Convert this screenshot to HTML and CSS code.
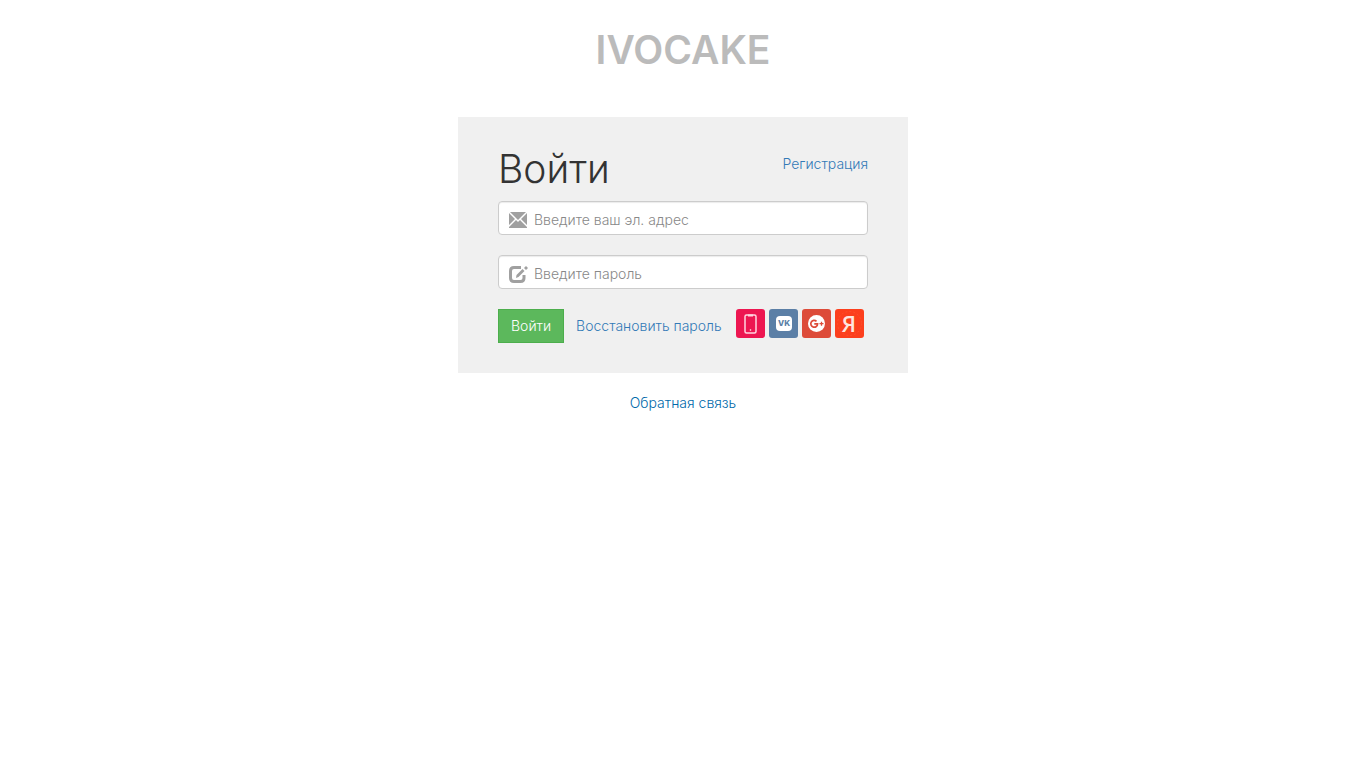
FILE: index.html
```html
<!DOCTYPE html>
<html lang="ru">
<head>
  <meta charset="UTF-8">
  <meta name="viewport" content="width=device-width, initial-scale=1.0">
  <title>Войти</title>
  <link rel="stylesheet" href="styles.css">
</head>
<body>

  <header class="logo">IVOCAKE</header>

  <main class="login-box">
    <div class="login-head">
      <h1>Войти</h1>
      <a href="#" class="register">Регистрация</a>
    </div>

    <form>
      <div class="field">
        <label for="email" aria-label="Эл. адрес">
          <svg width="18" height="16" viewBox="0 0 18 16" fill="#a0a0a0">
            <path d="M1 0H17L9 8Z"/>
            <path d="M0 1L6 7L0 13ZM18 1L12 7L18 13Z"/>
            <path d="M0 16V15L7 8L9 10L11 8L18 15V16Z"/>
          </svg>
        </label>
        <input type="email" id="email" placeholder="Введите ваш эл. адрес">
      </div>

      <div class="field">
        <label for="password" aria-label="Пароль">
          <svg width="19" height="17" viewBox="0 0 19 17" fill="none">
            <path d="M12 1.500H5Q1.500 1.500 1.500 5V12Q1.500 15.500 5 15.500H11.500Q15 15.500 15 12V9" stroke="#a0a0a0" stroke-width="3"/>
            <path d="M7 12L7.500 9L13.500 3L15.500 5L9.500 11Z" fill="#a0a0a0"/>
            <path d="M15 2L17 0L19 2L17 4Z" fill="#a0a0a0"/>
          </svg>
        </label>
        <input type="password" id="password" placeholder="Введите пароль">
      </div>

      <div class="actions">
        <button type="submit" class="login-btn">Войти</button>
        <a href="#" class="restore">Восстановить пароль</a>
        <div class="social">
          <a href="#" class="phone" aria-label="Телефон">
            <svg width="29" height="29" viewBox="0 0 29 29" fill="none" stroke="#ffd5e0">
              <rect x="9" y="6" width="11" height="18" rx="1.500" stroke-width="1.500"/>
              <path d="M12 6.500H17" stroke-width="2"/>
              <circle cx="14.500" cy="21" r="0.500"/>
            </svg>
          </a>
          <a href="#" class="vk" aria-label="VK">
            <svg width="29" height="29" viewBox="0 0 29 29">
              <rect x="7" y="7" width="16" height="15" rx="4" fill="#fff"/>
              <text x="15" y="17" text-anchor="middle" font-size="8" font-weight="800" fill="#5b7fa6">VK</text>
            </svg>
          </a>
          <a href="#" class="google" aria-label="Google+">
            <svg width="29" height="29" viewBox="0 0 29 29" fill="none" stroke="#dd4b39">
              <circle cx="14.500" cy="14.500" r="8.500" fill="#fff" stroke="none"/>
              <path d="M14.500 12.300A3.400 3.400 0 1 0 15.600 14.800H12.300" stroke-width="1.700"/>
              <path d="M17.500 14.700H21.500M19.500 12.700V16.700" stroke-width="1.300"/>
            </svg>
          </a>
          <a href="#" class="yandex" aria-label="Яндекс">
            <svg width="29" height="29" viewBox="0 0 29 29">
              <circle cx="14.500" cy="14.500" r="12" fill="none" stroke="#ff5a3a" stroke-width="0.500" stroke-dasharray="2 2"/>
              <text class="ya" x="14" y="23" text-anchor="middle" font-size="22" font-weight="600" fill="#ffe5df">Я</text>
            </svg>
          </a>
        </div>
      </div>
    </form>
  </main>

  <footer>
    <a href="#">Обратная связь</a>
  </footer>

</body>
</html>
```

FILE: styles.css
```css
* {
  box-sizing: border-box;
}

body {
  margin: 0;
  font-family: Inter, sans-serif;
  font-size: 14px;
  font-weight: 300;
  line-height: 20px;
  color: #333;
  background-color: #fff;
}

a {
  color: #337ab7;
  text-decoration: none;
}

a:hover {
  text-decoration: underline;
}

.logo {
  padding: 20px 0 37px;
  font-size: 39px;
  font-weight: 600;
  line-height: 60px;
  text-align: center;
  color: #bbb;
}

.login-box {
  max-width: 450px;
  margin: 0 auto;
  padding: 30px 40px;
  background-color: #f0f0f0;
}

.login-head {
  display: flex;
  justify-content: space-between;
  align-items: flex-start;
  padding-bottom: 10px;
}

h1 {
  margin: 0;
  font-size: 39px;
  font-weight: 300;
  line-height: 44px;
}

.register {
  padding-top: 7px;
}

.field {
  display: flex;
  align-items: center;
  height: 34px;
  margin-bottom: 20px;
  padding: 4px 10px 0;
  background-color: #fff;
  border: 1px solid #ccc;
  border-radius: 4px;
  box-shadow: inset 0 1px 1px rgba(0,0,0,0.08);
}

.field label {
  display: flex;
  flex: 0 0 25px;
}

.field input {
  flex: 1;
  min-width: 0;
  padding: 0;
  border: none;
  outline: none;
  background: transparent;
  font: inherit;
  color: #555;
}

.field input::placeholder {
  color: #888;
}

.actions {
  display: flex;
}

.login-btn {
  height: 34px;
  padding: 0 12px;
  background-color: #5cb85c;
  border: 1px solid #4cae4c;
  color: #fff;
  font: inherit;
  cursor: pointer;
}

.restore {
  padding: 7px 0 0 12px;
  white-space: nowrap;
}

.social {
  display: flex;
  gap: 4px;
  margin-left: auto;
  padding-right: 4px;
}

.social a {
  width: 29px;
  height: 29px;
  border-radius: 3px;
}

.social svg {
  display: block;
}

.phone {
  background-color: #ed1651;
}

.vk {
  background-color: #5b7fa6;
}

.google {
  background-color: #dd4b39;
}

.yandex {
  background-color: #fc3f1d;
}

.ya {
  font-family: "Open Sans", sans-serif;
}

footer {
  padding-top: 20px;
  text-align: center;
}

footer a {
  color: #0069aa;
}
```
